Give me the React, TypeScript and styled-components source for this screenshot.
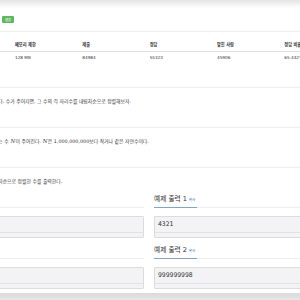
import React from "react";
import styled, { createGlobalStyle } from "styled-components";

const GlobalStyle = createGlobalStyle`
	html, body {
		margin: 0;
		padding: 0;
		background: #fff;
	}
	body {
		font-family: "DejaVu Sans", "Noto Sans CJK KR", sans-serif;
		color: #333;
	}
`;

const Viewport = styled.div`
	width: 300px;
	height: 300px;
	overflow: hidden;
	background: #fff;
`;

const TopShade = styled.div`
	height: 8px;
	background: linear-gradient(#e4e4e4, #fff);
`;

const BottomShade = styled.div`
	height: 12px;
	background: linear-gradient(#dadada, #f0f0f0);
`;

// the page is wider than the window; its left edge is cropped off
const Page = styled.div`
	width: 410px;
	margin-left: -56px;
	padding-bottom: 4px;
`;

const TitleRow = styled.div`
	height: 23px;
	display: flex;
	align-items: flex-start;
	padding-left: 58px;
	box-sizing: border-box;
`;

const Label = styled.span`
	margin-top: 8px;
	width: 12px;
	height: 7px;
	border-radius: 1px;
	background: #5cb85c;
	color: #fff;
	font-size: 3.2px;
	font-weight: 700;
	display: flex;
	align-items: center;
	justify-content: center;
`;

const InfoTable = styled.table`
	width: 404px;
	table-layout: fixed;
	border-collapse: collapse;
	border-top: 1px solid #eee;
	font-size: 4.2px;
`;

const Th = styled.th`
	text-align: left;
	font-weight: 700;
	padding: 10px 0 3px 3.7px;
	line-height: 6px;
	border-bottom: 1px solid #ddd;
`;

const Td = styled.td`
	padding: 3px 0 6px 3.7px;
	line-height: 6px;
`;

const Headline = styled.div`
	height: 20px;
	display: flex;
	align-items: flex-end;
	border-bottom: 1px solid #eee;
`;

const HeadSpan = styled.span<{ $indent?: number }>`
	margin-left: ${p => p.$indent ?? 0}px;
	margin-bottom: -1px;
	padding-bottom: 3px;
	border-bottom: 1px solid #7aa6d6;
	font-size: 6.7px;
	line-height: 8px;
	white-space: nowrap;
	display: flex;
	align-items: baseline;
`;

const CopyLink = styled.span`
	font-size: 3.6px;
	color: #2a7fc9;
	padding: 0 2px 0 1.6px;
`;

const Para = styled.p`
	margin: 9px 0 2px;
	padding-left: 5px;
	font-size: 4.85px;
	line-height: 8px;
	white-space: nowrap;
`;

// variables are typeset like MathJax output
const MathVar = styled.i`
	font-family: "DejaVu Serif", serif;
	font-size: 1.12em;
	padding: 0 0.3px;
`;

const Samples = styled.div`
	display: grid;
	grid-template-columns: 200px 200px;
	column-gap: 10px;
`;

const Pre = styled.pre`
	margin: 8px 0 0;
	border: 1px solid #dcdcdf;
	border-radius: 1px;
	background: #f3f3f5;
	padding: 0 0 4px;
	font-family: "DejaVu Sans Mono", monospace;
	font-size: 6.4px;
	color: #333;
`;

const SampleLine = styled.div`
	padding: 4px 3px 4px;
	line-height: 7px;
	border-bottom: 1px solid #e2e2e4;
	min-height: 7px;
`;

const stats = [
	["시간 제한", "2 초"],
	["메모리 제한", "128 MB"],
	["제출", "84984"],
	["정답", "55323"],
	["맞힌 사람", "45906"],
	["정답 비율", "65.442%"]
];

const sections: { title: string; text: React.ReactNode }[] = [
	{ title: "문제", text: "배열을 정렬하는 것은 쉽다. 수가 주어지면, 그 수의 각 자리수를 내림차순으로 정렬해보자." },
	{
		title: "입력",
		text: (
			<>
				첫째 줄에 정렬하려고 하는 수 <MathVar>N</MathVar>이 주어진다. <MathVar>N</MathVar>은
				1,000,000,000보다 작거나 같은 자연수이다.
			</>
		)
	},
	{ title: "출력", text: "첫째 줄에 자리수를 내림차순으로 정렬한 수를 출력한다." }
];

const samples = [
	{ input: "2143", output: "4321" },
	{ input: "999998999", output: "999999998" }
];

function SampleBlock(props: { title: string; data: string }) {
	return (
		<div>
			<Headline>
				<HeadSpan>
					{props.title}
					<CopyLink>복사</CopyLink>
				</HeadSpan>
			</Headline>
			<Pre>
				<SampleLine>{props.data}</SampleLine>
			</Pre>
		</div>
	);
}

export default function App() {
	return (
		<>
			<GlobalStyle />
			<Viewport>
				<TopShade />
				<Page>
					<TitleRow>
						<Label>성공</Label>
					</TitleRow>
					<InfoTable>
						<thead>
							<tr>
								{stats.map(_ => (
									<Th key={_[0]}>{_[0]}</Th>
								))}
							</tr>
						</thead>
						<tbody>
							<tr>
								{stats.map(_ => (
									<Td key={_[0]}>{_[1]}</Td>
								))}
							</tr>
						</tbody>
					</InfoTable>
					{sections.map(s => (
						<div key={s.title}>
							<Headline>
								<HeadSpan $indent={3}>{s.title}</HeadSpan>
							</Headline>
							<Para>{s.text}</Para>
						</div>
					))}
					<Samples>
						{samples.map((s, i) => (
							<React.Fragment key={i}>
								<SampleBlock title={`예제 입력 ${i + 1}`} data={s.input} />
								<SampleBlock title={`예제 출력 ${i + 1}`} data={s.output} />
							</React.Fragment>
						))}
					</Samples>
				</Page>
				<BottomShade />
			</Viewport>
		</>
	);
}
